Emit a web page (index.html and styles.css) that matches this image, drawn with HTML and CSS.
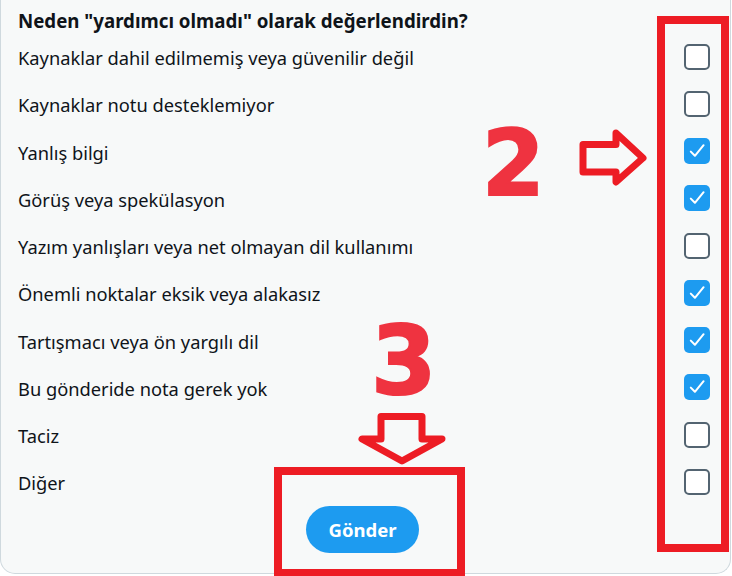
FILE: index.html
```html
<!DOCTYPE html>
<html lang="tr">
<head>
<meta charset="utf-8">
<title>Neden yardımcı olmadı</title>
<link rel="stylesheet" href="styles.css">
</head>
<body>
<div class="card">
  <h2 class="title">Neden "yardımcı olmadı" olarak değerlendirdin?</h2>
  <ul class="options">
    <li class="option"><span class="label">Kaynaklar dahil edilmemiş veya güvenilir değil</span><span class="box"></span></li>
    <li class="option"><span class="label">Kaynaklar notu desteklemiyor</span><span class="box"></span></li>
    <li class="option"><span class="label">Yanlış bilgi</span><span class="box checked"><svg viewBox="0 0 26 26"><path d="M6.8 13.6 L10.9 17.8 L19.6 7.2"/></svg></span></li>
    <li class="option"><span class="label">Görüş veya spekülasyon</span><span class="box checked"><svg viewBox="0 0 26 26"><path d="M6.8 13.6 L10.9 17.8 L19.6 7.2"/></svg></span></li>
    <li class="option"><span class="label">Yazım yanlışları veya net olmayan dil kullanımı</span><span class="box"></span></li>
    <li class="option"><span class="label">Önemli noktalar eksik veya alakasız</span><span class="box checked"><svg viewBox="0 0 26 26"><path d="M6.8 13.6 L10.9 17.8 L19.6 7.2"/></svg></span></li>
    <li class="option"><span class="label">Tartışmacı veya ön yargılı dil</span><span class="box checked"><svg viewBox="0 0 26 26"><path d="M6.8 13.6 L10.9 17.8 L19.6 7.2"/></svg></span></li>
    <li class="option"><span class="label">Bu gönderide nota gerek yok</span><span class="box checked"><svg viewBox="0 0 26 26"><path d="M6.8 13.6 L10.9 17.8 L19.6 7.2"/></svg></span></li>
    <li class="option"><span class="label">Taciz</span><span class="box"></span></li>
    <li class="option"><span class="label">Diğer</span><span class="box"></span></li>
  </ul>
  <div class="actions"><button class="send" type="button">Gönder</button></div>

  <div class="mark mark-boxes"></div>
  <div class="mark mark-send"></div>
  <div class="digit digit-2">2</div>
  <div class="digit digit-3">3</div>
  <svg class="arrows" viewBox="0 0 731 576" width="731" height="576">
    <polygon points="582,144.5 615,144.5 615,133 642,158 615,182 615,172 582,172"/>
    <polygon points="380,416.5 421,416.5 421,439 441,439 401,461 361,439 380,439"/>
  </svg>
</div>
</body>
</html>
```
FILE: styles.css
```css
html, body {
  margin: 0;
  padding: 0;
  background: #ffffff;
}
body {
  width: 732px;
  height: 576px;
  overflow: hidden;
  font-family: "Noto Sans", "Open Sans", sans-serif;
  color: #0f1419;
}
.card {
  position: relative;
  box-sizing: border-box;
  width: 731px;
  height: 574px;
  background: #f7f9f9;
  border: 1px solid #cfd9de;
  border-top: none;
  border-radius: 0 0 15px 15px;
  padding: 10px 20px 20px 17px;
  display: flex;
  flex-direction: column;
}
.title {
  margin: 0 0 1px 0;
  font-size: 18.7px;
  line-height: 22px;
  font-weight: 700;
}
.options {
  list-style: none;
  margin: 0;
  padding: 0;
}
.option {
  height: 47.25px;
  display: flex;
  align-items: center;
  justify-content: space-between;
  font-size: 18.3px;
}
.label {
  color: #0f1419;
  padding-top: 2px;
}
.box {
  box-sizing: border-box;
  width: 26px;
  height: 26px;
  border: 2px solid #536471;
  border-radius: 5px;
  background: #ffffff;
  display: flex;
}
.box.checked {
  border: none;
  background: #1d9bf0;
}
.box svg {
  width: 26px;
  height: 26px;
}
.box svg path {
  fill: none;
  stroke: #ffffff;
  stroke-width: 2;
  stroke-linecap: round;
  stroke-linejoin: round;
}
.actions {
  display: flex;
  justify-content: center;
}
.send {
  width: 113px;
  height: 47px;
  border: none;
  border-radius: 24px;
  background: #1d9bf0;
  color: #ffffff;
  font-family: "Noto Sans", "Open Sans", sans-serif;
  font-size: 18.5px;
  font-weight: 700;
  margin-left: -3px;
}
.mark {
  position: absolute;
  box-sizing: border-box;
  border: 8px solid #ed1c24;
}
.mark-boxes {
  left: 656px;
  top: 16px;
  width: 72px;
  height: 536px;
}
.mark-send {
  left: 273px;
  top: 467px;
  width: 191px;
  height: 110px;
}
.digit {
  position: absolute;
  font-family: "DejaVu Sans", sans-serif;
  font-weight: 700;
  color: #ef3340;
  -webkit-text-stroke: 2px #ef3340;
  line-height: 1;
}
.digit-2 {
  left: 481px;
  top: 119px;
  font-size: 90px;
}
.digit-3 {
  left: 370px;
  top: 315px;
  font-size: 94px;
}
.arrows {
  position: absolute;
  left: 0;
  top: 0;
  pointer-events: none;
}
.arrows polygon {
  fill: none;
  stroke: #ed1c24;
  stroke-width: 7;
  stroke-linejoin: round;
}
```
